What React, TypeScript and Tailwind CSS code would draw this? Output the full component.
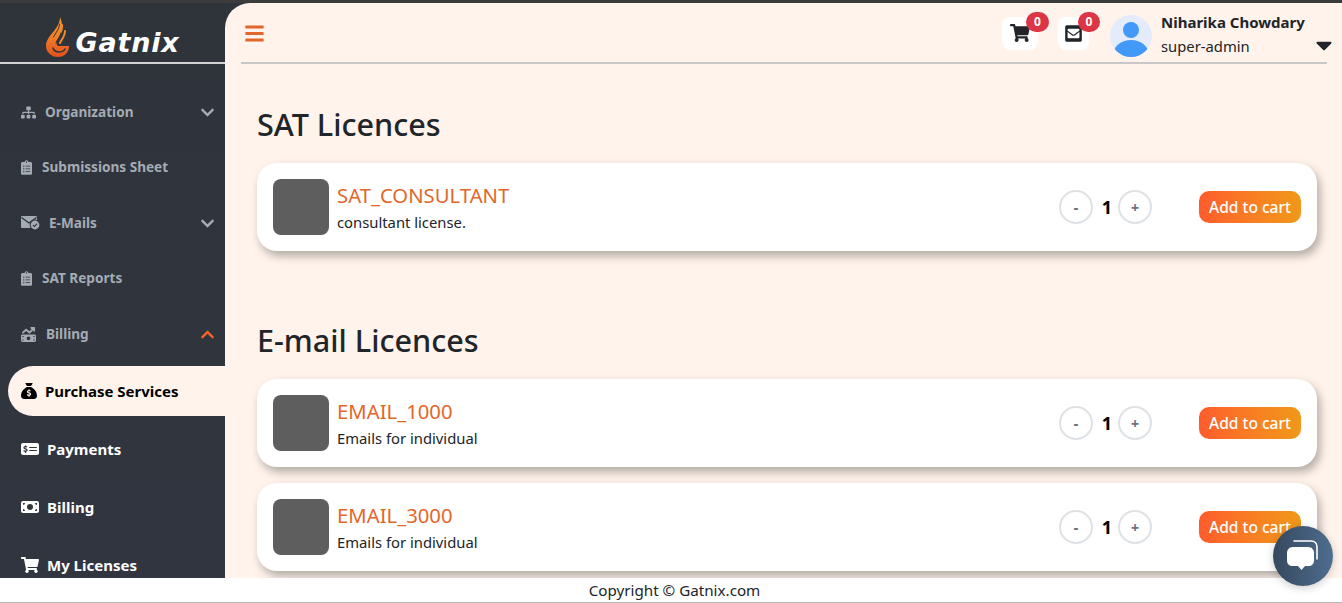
import { FaBars, FaCaretDown, FaChevronDown, FaChevronUp, FaClipboardList, FaEnvelopeSquare, FaShoppingCart, FaSitemap } from 'react-icons/fa'
import { FaMoneyBill, FaMoneyBillTrendUp, FaMoneyCheckDollar, FaSackDollar } from 'react-icons/fa6'

function MailCheckIcon({ className }: { className?: string }) {
  return (
    <svg viewBox="0 0 19 14" className={className}>
      <path d="M1 0h14a1 1 0 0 1 1 1v10a1 1 0 0 1-1 1H1a1 1 0 0 1-1-1V1a1 1 0 0 1 1-1z" fill="currentColor" />
      <path d="M0.5 1.5L8 7l7.5-5.5" fill="none" stroke="#2f343b" strokeWidth="1.3" />
      <circle cx="14" cy="9" r="5.4" fill="#2f343b" />
      <circle cx="14" cy="9" r="4.4" fill="currentColor" />
      <path d="M12 9.2l1.5 1.3 2.5-2.8" fill="none" stroke="#2f343b" strokeWidth="1.1" />
    </svg>
  )
}

const dimItems = [
  { label: 'Organization', icon: FaSitemap, size: 'w-[15px] h-[15px]', chevron: 'down', height: 'h-[55px]', ml: 'ml-[9px]' },
  { label: 'Submissions Sheet', icon: FaClipboardList, size: 'w-[11px] h-[15px]', height: 'h-[55px]', ml: 'ml-[10px]' },
  { label: 'E-Mails', icon: MailCheckIcon, size: 'w-[19px] h-[14px]', chevron: 'down', height: 'h-[56px]', ml: 'ml-[9px]' },
  { label: 'SAT Reports', icon: FaClipboardList, size: 'w-[11px] h-[15px]', height: 'h-[55px]', ml: 'ml-[10px]' },
  { label: 'Billing', icon: FaMoneyBillTrendUp, size: 'w-[15px] h-[15px]', chevron: 'up', height: 'h-[56px]', ml: 'ml-[10px]' },
]

const subItems = [
  { label: 'Payments', icon: FaMoneyCheckDollar },
  { label: 'Billing', icon: FaMoneyBill },
  { label: 'My Licenses', icon: FaShoppingCart },
]

const satLicences = [{ name: 'SAT_CONSULTANT', description: 'consultant license.' }]
const emailLicences = [
  { name: 'EMAIL_1000', description: 'Emails for individual' },
  { name: 'EMAIL_3000', description: 'Emails for individual' },
]

function LicenceCard({ name, description }: { name: string; description: string }) {
  return (
    <div className="flex items-center h-[88px] px-4 bg-white rounded-[20px] shadow-[3px_5px_10px_rgba(0,0,0,0.3)]">
      <div className="w-14 h-14 rounded-lg bg-[#5e5e5e] shrink-0" />
      <div className="ml-2 flex-1">
        <div className="text-[20.3px] leading-[26px] text-[#e2672b]">{name}</div>
        <div className="text-[14.8px] leading-[20px] mt-1 text-[#212529]">{description}</div>
      </div>
      <div className="flex items-center">
        <button className="w-[34px] h-[34px] rounded-full border-2 border-[#dee2e6] text-[14px] font-extrabold text-[#6c757d]">-</button>
        <span className="w-[25px] pl-[3px] pt-[1px] text-center text-[18px] font-bold text-black">1</span>
        <button className="w-[34px] h-[34px] rounded-full border-2 border-[#dee2e6] text-[14px] font-extrabold text-[#6c757d]">+</button>
      </div>
      <button className="ml-[47px] w-[102px] h-8 pt-[1px] rounded-[10px] bg-gradient-to-r from-[#ff5c2b] to-[#f09819] text-white text-[15.5px] font-medium">
        Add to cart
      </button>
    </div>
  )
}

export default function App() {
  return (
    <div className="h-screen flex flex-col overflow-hidden bg-[#2f343d] font-['Noto_Sans',sans-serif]">
      <div className="h-[3px] bg-[#3c3c3c] shrink-0" />
      <div className="flex flex-1 min-h-0">
        {/* Sidebar */}
        <aside className="w-[225px] shrink-0 flex flex-col bg-gradient-to-b from-[#2f343b] to-[#31353f] overflow-hidden">
          <div className="h-[61px] shrink-0 border-b-2 border-[#d2d2d2] flex items-end justify-center gap-[7px] pb-[5px]">
            <svg viewBox="0 0 23 40" className="w-[23px] h-[40px]">
              <defs>
                <linearGradient id="flame" x1="0" y1="0" x2="0" y2="1">
                  <stop offset="0" stopColor="#f7a035" />
                  <stop offset="0.55" stopColor="#f07a26" />
                  <stop offset="1" stopColor="#e2501c" />
                </linearGradient>
              </defs>
              <path d="M14 0c2 5 3 10 1 15-1 3-3 6-4 9-1 3 0 5 2 5h10c0 6-4 11-11 11C5 40 0 35 0 29c0-6 4-10 8-15 3-4 6-8 6-14z" fill="url(#flame)" />
              <path d="M16 8c1 6-3 10-5 14M19 14c0 5-3 8-5 12" fill="none" stroke="#f08a2c" strokeWidth="2" strokeLinecap="round" />
              <path d="M13.5 7c0 5-4 9-6 13M15 16c-1 4-4 6-5 10" fill="none" stroke="#3a2a28" strokeWidth="1" strokeLinecap="round" />
              <path d="M7 31c1 3 3 4 6 4 3 0 5-1 6-3" fill="none" stroke="#2f343b" strokeWidth="1.6" strokeLinecap="round" />
            </svg>
            <span className="-mb-[1px] text-[27px] leading-[30px] font-black italic tracking-[0.8px] text-white font-['DejaVu_Sans',sans-serif]">Gatnix</span>
          </div>

          <nav className="pt-[21px] flex flex-col">
            {dimItems.map((item) => (
              <div key={item.label} className={'flex items-center pl-[21px] pr-[10px] text-[#a4abb3] ' + item.height}>
                <item.icon className={'shrink-0 ' + item.size} />
                <span className={'flex-1 text-[13.6px] font-bold ' + item.ml}>{item.label}</span>
                {item.chevron === 'down' && <FaChevronDown className="w-[15px] h-[15px]" />}
                {item.chevron === 'up' && <FaChevronUp className="w-[15px] h-[15px] text-[#f0642c]" />}
              </div>
            ))}
            <div className="ml-2 h-[50px] mt-1 flex items-center pl-[13px] gap-2 bg-[#fff3eb] rounded-l-[25px] text-black">
              <FaSackDollar className="w-4 h-4" />
              <span className="text-[15px] font-bold">Purchase Services</span>
            </div>
            <div className="pt-1">
              {subItems.map((item) => (
                <div key={item.label} className="h-[58px] flex items-center pl-[21px] gap-2 text-white">
                  <item.icon className="w-[18px] h-[18px]" />
                  <span className="text-[15px] font-bold">{item.label}</span>
                </div>
              ))}
            </div>
          </nav>
        </aside>

        {/* Main */}
        <main className="flex-1 min-w-0 bg-[#fff3eb] rounded-tl-[25px] overflow-hidden">
          <header className="h-[61px] pt-[3px] ml-4 mr-[15px] border-b-2 border-[#c8c6c6] flex items-center">
            <FaBars className="ml-[3px] mb-[2px] w-[21px] h-[21px] text-[#e2672b]" />
            <div className="ml-auto flex items-center">
              <div className="relative mb-[2px] w-9 h-[33px] bg-white rounded-lg flex items-center justify-center">
                <FaShoppingCart className="w-5 h-5 text-[#212529]" />
                <span className="absolute -top-[5px] -right-[11px] w-[23px] h-5 rounded-full bg-[#dc3545] text-white text-[12px] font-bold leading-5 text-center">0</span>
              </div>
              <div className="relative mb-[2px] ml-[20px] w-[31px] h-[33px] bg-white rounded-lg flex items-center justify-center">
                <FaEnvelopeSquare className="w-[19px] h-[19px] text-[#212529]" />
                <span className="absolute -top-[5px] -right-[11px] w-[22px] h-5 rounded-full bg-[#dc3545] text-white text-[12px] font-bold leading-5 text-center">0</span>
              </div>
              <svg viewBox="0 0 42 42" className="mt-[4px] ml-[21px] w-[42px] h-[42px]">
                <clipPath id="avatar"><circle cx="21" cy="21" r="21" /></clipPath>
                <g clipPath="url(#avatar)">
                  <rect width="42" height="42" fill="#e4ebfb" />
                  <circle cx="21" cy="15" r="8" fill="#4299f7" />
                  <ellipse cx="21" cy="38" rx="17" ry="13" fill="#4299f7" />
                </g>
              </svg>
              <div className="ml-[9px] w-[166px] relative">
                <div className="text-[15px] leading-5 font-bold text-[#212529]">Niharika Chowdary</div>
                <div className="text-[14.8px] leading-5 mt-1 text-[#212529]">super-admin</div>
                <FaCaretDown className="absolute right-[-10px] top-[20px] w-[26px] h-[26px] text-[#212529]" />
              </div>
            </div>
          </header>

          <section className="pl-8 pr-[25px]">
            <h1 className="mt-[38px] text-[30.6px] leading-[44px] font-medium text-[#212529]">SAT Licences</h1>
            <div className="mt-[17px] flex flex-col gap-4">
              {satLicences.map((l) => <LicenceCard key={l.name} {...l} />)}
            </div>
            <h1 className="mt-[67px] text-[30.6px] leading-[44px] font-medium text-[#212529]">E-mail Licences</h1>
            <div className="mt-[17px] flex flex-col gap-4">
              {emailLicences.map((l) => <LicenceCard key={l.name} {...l} />)}
            </div>
          </section>
        </main>
      </div>

      <footer className="h-[25px] shrink-0 bg-white border-b border-[#b5b5b5] pl-[7px] text-center text-[15.2px] leading-[24px] text-[#212529]">
        Copyright © Gatnix.com
      </footer>

      {/* Chat bubble */}
      <div className="fixed left-[1273px] top-[526px] w-[60px] h-[60px] rounded-full bg-gradient-to-r from-[#35495e] to-[#4f6d8f] shadow-[0_2px_8px_rgba(0,0,0,0.2)]">
        <svg viewBox="0 0 60 60" className="w-[60px] h-[60px]">
          <path d="M21 15h17c4 0 6 3 6 6v12" fill="none" stroke="#fff" strokeWidth="1.6" strokeLinecap="round" />
          <path d="M20 21h15c4 0 6 3 6 6v7c0 4-2 6-6 6h-3l-3.500 4-3.500-4h-5c-4 0-6-2-6-6v-7c0-3 2-6 6-6z" fill="#fff" />
        </svg>
      </div>
    </div>
  )
}
